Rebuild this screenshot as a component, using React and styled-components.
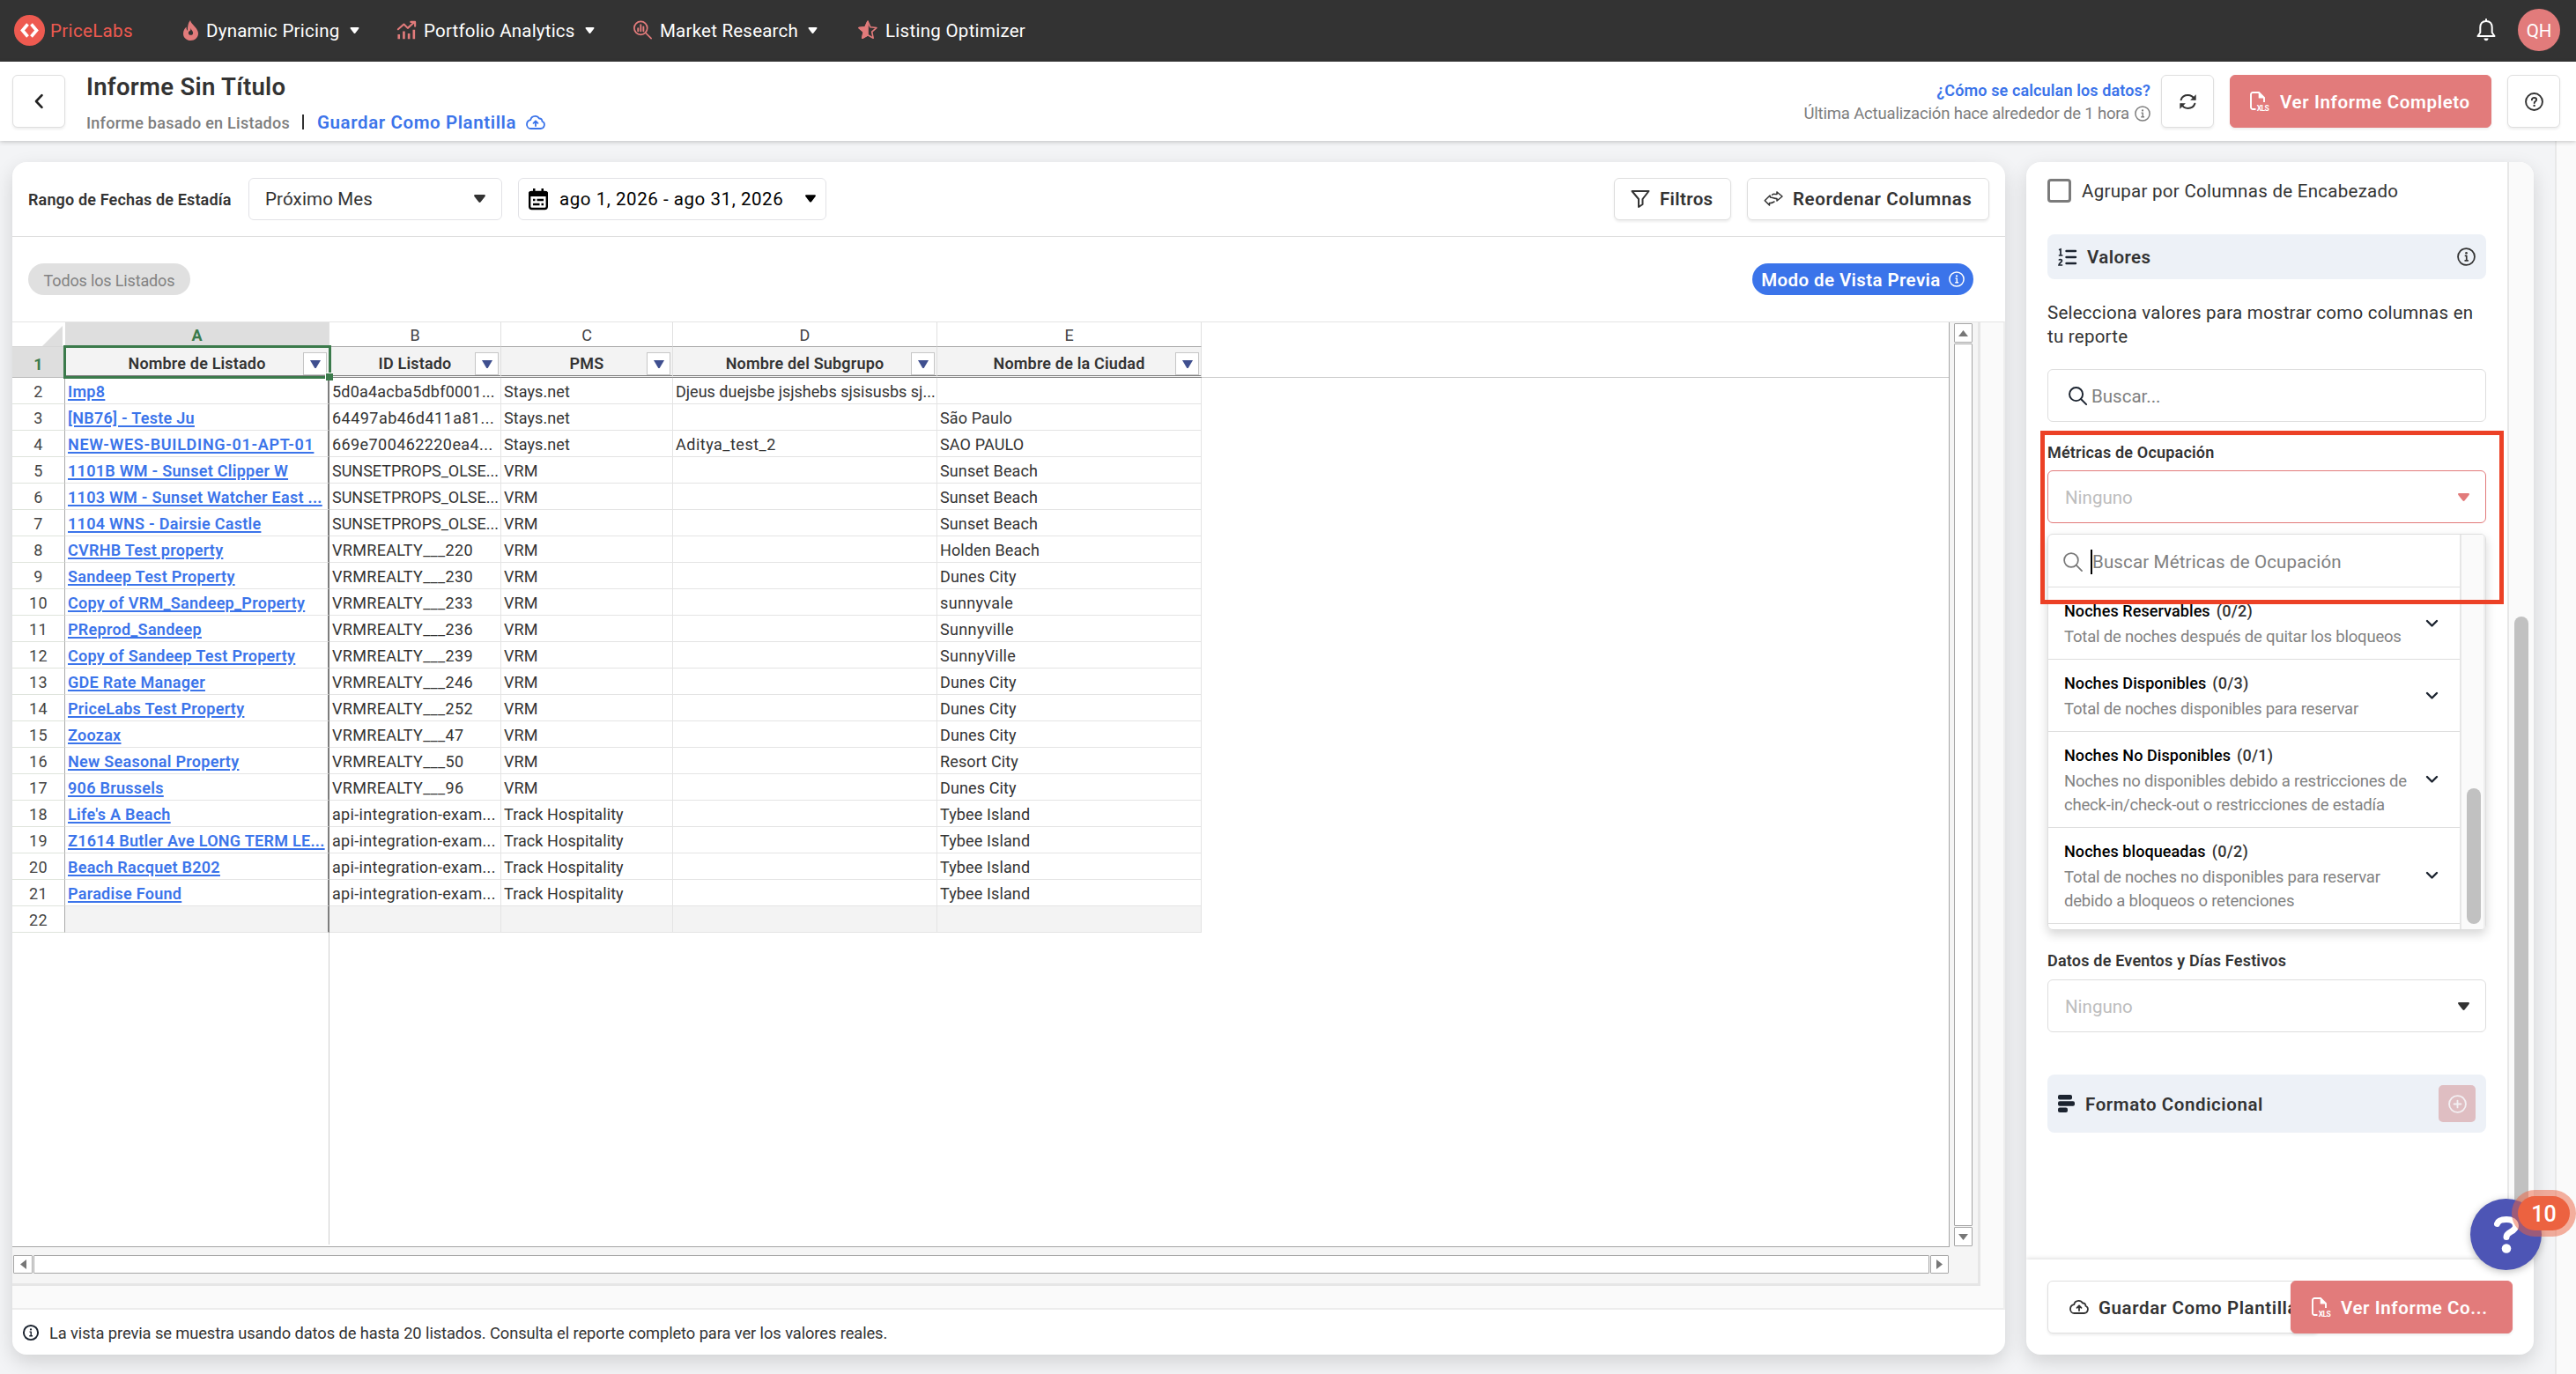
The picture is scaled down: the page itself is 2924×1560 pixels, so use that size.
import React from "react";
import styled, {createGlobalStyle, css} from "styled-components";

const GlobalStyle = createGlobalStyle`
  * { box-sizing: border-box; }
  html, body { margin: 0; padding: 0; }
  body {
    width: 2924px;
    height: 1560px;
    overflow: hidden;
    background: #f3f4f6;
    color: #333;
    font-family: Roboto, "Liberation Sans", sans-serif;
    font-size: 20px;
  }
  svg { display: block; flex: none; overflow: visible; }
`

const Text = styled.span`
  display: block;
  flex: none;
  white-space: nowrap;
  transform: translateY(1px);
  font-size: ${p => p.$size || 20.5}px;
  font-weight: ${p => p.$weight || 400};
  color: ${p => p.$color || "#333"};
  letter-spacing: ${p => p.$track || 0}px;
  line-height: 27px;
`

/* ---------- icons ---------- */

const Svg = ({w = 21, h = w, box = "0 0 24 24", color = "currentColor", sw = 2, fill = "none", children}) => (
    <svg width={w} height={h} viewBox={box} fill={fill} stroke={fill === "none" ? color : "none"} color={color}
         strokeWidth={sw} strokeLinecap="round" strokeLinejoin="round">
        {children}
    </svg>
)

const Caret = ({w = 13, h = 9, color = "#333"}) => (
    <svg width={w} height={h} viewBox="0 0 13 9" fill={color}>
        <path d="M1.2 0h10.6c1 0 1.5 1.100.8 1.900L7.700 8.200a1.600 1.600 0 0 1-2.400 0L.4 1.900C-.3 1.100.2 0 1.200 0z"/>
    </svg>
)

const Flame = () => (
    <svg width="17" height="23" viewBox="0 0 17 23" fill="#e27b7b">
        <path d="M8 0c.5 3 3 4.500 5.300 7.400C15.500 10 17 12 17 15c0 4.600-3.800 8-8.500 8S0 19.800 0 15.200C0 12 1.500 9.500 3.600 7.600c-.2 2 .2 3.300 1.400 4.300C5 8.500 5 3.500 8 0z"/>
        <path d="M8.500 8.800c.2 2.200 2.600 3.300 2.600 5.400a2.600 2.600 0 0 1-5.200 0c0-.8.200-1.300.6-1.800 1.500.3 2.200-1.600 2-3.600z" fill="#333"/>
    </svg>
)

const ChartIcon = () => (
    <Svg w={21} h={21} color="#e27b7b" sw={2.4}>
        <path d="M1 10.500 8.500 4l5 5L22 1.500M17.500 1H23v5.500"/>
        <path d="M2 17v6M8.500 13v10M15 16v7M21.500 11v12" strokeWidth="3" strokeLinecap="butt"/>
    </Svg>
)

const MarketIcon = () => (
    <Svg w={21} h={22} color="#e27b7b" sw={2}>
        <circle cx="9.500" cy="9.500" r="8.500"/>
        <path d="m16 16 7 7"/>
        <path d="M6 10v3.500M9.500 5.500v8M13 8v5.500" strokeWidth="2.200"/>
    </Svg>
)

const StarIcon = () => (
    <Svg w={22} h={22} color="#e27b7b" sw={1.8}>
        <path d="M12 1.500l3.200 7 7.600.8-5.700 5.100 1.600 7.600L12 18.200l-6.700 3.800 1.600-7.600L1.200 9.300l7.600-.8z"/>
        <path d="M12 1.500v16.700l-6.700 3.800 1.600-7.600L1.200 9.300l7.600-.8z" fill="#e27b7b"/>
    </Svg>
)

const BellIcon = () => (
    <Svg w={22} h={26} box="0 0 22 26" color="#fff" sw={2}>
        <path d="M11 1v2M11 3c-4.400 0-6.700 3-6.700 7v6L1.500 20h19l-2.800-4v-6c0-4-2.300-7-6.700-7z"/>
        <path d="M8.500 22.500h5c0 1.800-1 2.800-2.500 2.800s-2.500-1-2.500-2.800z" fill="#fff" stroke="none"/>
    </Svg>
)

const CloudIcon = ({color = "#333", w = 22, sw = 1.8}) => (
    <Svg w={w} h={w * 16 / 22} box="0 0 22 16" color={color} sw={sw}>
        <path d="M5.500 15h11a4.300 4.300 0 0 0 1.900-8.200C18.500 4.500 17 3.300 15 3.500 14 1.800 12.300.8 10.300.9 7.600 1 5.800 2.700 5.200 5.200 2.700 5.800 1 7.500 1 10.200 1 13 3 15 5.500 15z"/>
        <path d="M11 12V6.500M8.500 8.800 11 6.300l2.500 2.500" />
    </Svg>
)

const InfoIcon = ({w = 21, color = "#333", sw = 2}) => (
    <Svg w={w} color={color} sw={sw}>
        <circle cx="12" cy="12" r="10.800"/>
        <path d="M10 10.800h2.300v6M9.700 17h5" strokeWidth="1.900" strokeLinecap="butt"/>
        <circle cx="12" cy="7.200" r="1.500" fill={color} stroke="none"/>
    </Svg>
)

const HelpIcon = () => (
    <Svg w={21} sw={2.2} color="#333">
        <circle cx="12" cy="12" r="10.800"/>
        <path d="M9 9.600c0-1.700 1.300-2.700 3-2.700s3 1 3 2.600c0 2-2.800 2.100-2.800 4.300"/>
        <circle cx="12.100" cy="17" r="1.400" fill="#333" stroke="none"/>
    </Svg>
)

const RefreshIcon = () => (
    <Svg w={21} sw={2.3} color="#333">
        <path d="M3 9.500C4.200 6 7.500 3.500 12 3.500c3.500 0 6.500 1.800 8.500 5M21 14.500c-1.200 3.500-4.500 6-9 6-3.500 0-6.500-1.800-8.500-5"/>
        <path d="M22.500 2.500v7.500H15zM1.500 21.500V14H9z" fill="#333" stroke="none"/>
    </Svg>
)

const XlsIcon = () => (
    <svg width="22" height="22" viewBox="0 0 22 22">
        <path d="M6.500 20H3.200A2.200 2.200 0 0 1 1 17.800V3.200A2.200 2.200 0 0 1 3.200 1H10l6 6v5" fill="none" stroke="#fff" strokeWidth="1.900"/>
        <path d="M9.700 1v6.500h6.500z" fill="#fff"/>
        <text x="7.800" y="21.500" fontSize="8.500" fontWeight="700" fill="#fff" fontFamily="Roboto" textLength="14">XLS</text>
    </svg>
)

const FilterIcon = () => (
    <Svg w={22} h={20} box="0 0 22 20" sw={2}>
        <path d="M1.500 1h19l-7 9v6l-4.500 3v-9z"/>
    </Svg>
)

const SwapIcon = () => (
    <Svg w={22} h={17} box="0 0 22 17" sw={1.5}>
        <path d="M15 1l6 5-6 5V8.500c-3 0-5-1.500-7.500-1.500L7 5l-5.800 5.700L6.500 16v-2.500c3 .4 3.500-.8 5.500-1.500M15 1v2.500c-2.500.3-3.500-1-5.500.7"/>
    </Svg>
)

const CalendarIcon = () => (
    <svg width="22" height="24" viewBox="0 0 22 24">
        <rect x="1.200" y="4" width="19.600" height="19" rx="2.500" fill="none" stroke="#000" strokeWidth="2.400"/>
        <path d="M0 9V5.500A2.500 2.500 0 0 1 2.500 3H5V0h2.500v3h7V0H17v3h2.500A2.500 2.500 0 0 1 22 5.500V9z" fill="#000"/>
        <path d="M5 13h2.500M9.500 13H17M5 18h7.500M14.500 18H17" stroke="#000" strokeWidth="2.300"/>
    </svg>
)

const SearchIcon = ({w = 21, color = "#1c2430", sw = 2.2}) => (
    <Svg w={w} color={color} sw={sw}>
        <circle cx="9.800" cy="9.800" r="8.600"/>
        <path d="m16 16 7 7"/>
    </Svg>
)

const Chevron = () => (
    <Svg w={13} h={8} box="0 0 13 8" color="#1c2430" sw={2.4}><path d="M1 1l5.500 5.500L12 1"/></Svg>
)

const ListIcon = () => (
    <svg width="21" height="20" viewBox="0 0 21 20">
        <path d="M9.500 3h10.500M9.500 10h10.500M9.500 17h10.500" stroke="#1c2430" strokeWidth="2.400" strokeLinecap="round"/>
        <path d="M1 1.800 3 1v7M.8 8h4.600M1 13.500c.6-1.300 3.600-1.200 3.500.4C4.400 15.500 1.200 17 1 19h4.200" fill="none" stroke="#1c2430" strokeWidth="1.700"/>
    </svg>
)

const BarsIcon = () => (
    <svg width="19" height="20" viewBox="0 0 19 20" fill="#1c2430">
        <rect x="0" y="0" width="16" height="5.600" rx="2"/>
        <rect x="0" y="7.200" width="19" height="5.600" rx="2"/>
        <rect x="0" y="14.400" width="11" height="5.600" rx="2"/>
    </svg>
)

const PlusCircle = () => (
    <Svg w={21} color="#f3f0f3" sw={2.1}>
        <circle cx="12" cy="12" r="10.800"/>
        <path d="M12 7.500v9M7.500 12h9"/>
    </Svg>
)

/* ---------- top bars ---------- */

const NavBar = styled.nav`
  height: 70px;
  background: #333;
  display: flex;
  align-items: center;
  padding: 0 18px 2px 16px;
`
const Logo = styled.div`
  width: 192px;
  display: flex;
  align-items: center;
  gap: 6px;
`
const NavItem = styled.div`
  width: ${p => p.$width}px;
  display: flex;
  align-items: center;
  gap: ${p => p.$gap || 9}px;
  > svg:last-child { margin-left: 2px; }
`
const NavRight = styled.div`
  margin-left: auto;
  display: flex;
  align-items: center;
  gap: 25px;
`
const Avatar = styled.div`
  width: 48px;
  height: 48px;
  border-radius: 50%;
  background: #e27b7b;
  display: flex;
  align-items: center;
  justify-content: center;
`

const HeaderBar = styled.header`
  position: relative;
  height: 90px;
  background: #fff;
  box-shadow: 0 1px 5px rgba(0, 0, 0, .22);
  display: flex;
  align-items: center;
  padding: 0 18px 0 14px;
`
const Button = styled.div`
  display: flex;
  flex: none;
  align-items: center;
  justify-content: ${p => p.$width > 60 ? "flex-start" : "center"};
  gap: ${p => p.$gap || 12}px;
  width: ${p => p.$width}px;
  height: ${p => p.$height || 60}px;
  padding-left: ${p => p.$pad || 0}px;
  margin-left: ${p => p.$ml || 0}px;
  border-radius: 6px;
  color: #333;
  background: #fff;
  border: 1px solid #dfdfdf;
  box-shadow: 0 2px 3px rgba(0, 0, 0, .07);
  ${p => p.$primary && css`
    background: #e27b7b;
    border-color: #e27b7b;
    z-index: 1;
  `}
`
const Titles = styled.div`
  margin-left: 24px;
  margin-top: 6px;
`
const SubTitle = styled.div`
  display: flex;
  align-items: center;
  margin-top: 14px;
  > svg { margin-left: 11px; }
`
const Bar = styled.div`
  width: 2px;
  height: 17px;
  background: #333;
  margin: 0 15px 0 14px;
`
const Updated = styled.div`
  margin-left: auto;
  display: flex;
  flex-direction: column;
  align-items: flex-end;
  > div { display: flex; align-items: center; gap: 6px; }
`

/* ---------- main area ---------- */

const Main = styled.main`
  height: 1400px;
  display: flex;
  padding: 24px 0 22px 14px;
`
const Card = styled.section`
  flex: none;
  width: ${p => p.$width}px;
  height: 1354px;
  margin-right: ${p => p.$mr}px;
  border-radius: 16px;
  overflow: hidden;
  background: #fff;
  display: flex;
  flex-direction: column;
  box-shadow: 0 8px 22px rgba(0, 0, 0, .14);
`
const PageScroll = styled.div`
  width: 24px;
  height: 1400px;
  margin-top: -24px;
  background: #fafafa;
  border-left: 2px solid #e8e8e8;
`
const Toolbar = styled.div`
  height: 85px;
  border-bottom: 1px solid #dedede;
  display: flex;
  align-items: center;
  padding: 0 18px 1px;
`
const RangeLabel = styled.div`
  width: 250px;
`
const Picker = styled.div`
  height: 48px;
  width: ${p => p.$width}px;
  margin-left: ${p => p.$ml}px;
  border: 1px solid #e2e2e6;
  border-radius: 6px;
  display: flex;
  align-items: center;
  padding: 0 ${p => p.$right}px 0 ${p => p.$left}px;
  gap: 13px;
  > svg:last-child { margin-left: auto; }
`
const Spacer = styled.div`flex: 1;`
const PillRow = styled.div`
  height: 96px;
  display: flex;
  align-items: center;
  justify-content: space-between;
  padding: 0 36px 0 18px;
`
const Pill = styled.div`
  height: 36px;
  width: ${p => p.$width}px;
  border-radius: 18px;
  background: ${p => p.$bg};
  display: flex;
  align-items: center;
  justify-content: center;
  gap: 9px;
`

/* ---------- spreadsheet ---------- */

const SheetArea = styled.div`
  height: 1122px;
  flex: none;
  display: flex;
  border-top: 1px solid #e4e4e4;
  border-right: 2px solid #eee;
  border-bottom: 2px solid #ececec;
  background: #fafafa;
`
const Sheet = styled.div`
  width: 2234px;
  height: 1094px;
  background: #f5f5f5;
  border-right: 3px solid #e6e6e6;
  border-bottom: 3px solid #e6e6e6;
  display: grid;
  grid-template-columns: 2199px 1fr;
  grid-template-rows: 1050px 1fr;
`
const Viewport = styled.div`
  background: #fff;
  border-right: 1px solid #a6a6a6;
  border-bottom: 1px solid #a6a6a6;
  position: relative;
`
const COLS = "60px 300px 195px 195px 300px 300px"
const LetterRow = styled.div`
  display: grid;
  grid-template-columns: ${COLS};
  height: 28px;
`
const Letter = styled.div`
  display: flex;
  align-items: center;
  justify-content: center;
  background: ${p => p.$on ? "#dedede" : "#fff"};
  border-right: 1px solid #e0e0e0;
  border-bottom: 1px solid #ababab;
`
const Corner = styled.div`
  display: flex;
  justify-content: flex-end;
  padding: 4px 3px 0 0;
  border-bottom: 1px solid #d6d6d6;
`
const HeadRow = styled.div`
  display: grid;
  grid-template-columns: ${COLS};
  height: 35px;
  background: linear-gradient(#ccc, #ccc) bottom / 100% 1px no-repeat;
`
const HeadCell = styled.div`
  display: flex;
  align-items: center;
  justify-content: center;
  position: relative;
  padding-top: 2px;
  background: ${p => p.$num ? "#dedede" : "#f3f3f3"};
  border-right: 1px solid ${p => p.$num ? "#dedede" : "#e0e0e0"};
  border-bottom: ${p => p.$num ? "1px solid #bbb" : "3px double #808080"};
`
const FilterButton = styled.div`
  position: absolute;
  right: 2px;
  top: 6px;
  width: 27px;
  height: 26px;
  background: #fff;
  border: 1px solid #c6c6c6;
  display: flex;
  align-items: center;
  justify-content: center;
`
const Row = styled.div`
  display: grid;
  grid-template-columns: ${COLS};
  height: 30px;
`
const Cell = styled.div`
  overflow: hidden;
  padding: 1px 0 0 3px;
  background: ${p => p.$empty ? "#f3f3f3" : "#fff"};
  border-right: 1px solid #e4e4e4;
  border-bottom: 1px solid #e4e4e4;
  > span { text-decoration: ${p => p.$link ? "underline" : "none"}; text-decoration-thickness: 1.5px; text-underline-offset: 2px; }
  ${p => p.$link && css`border-right: 2px solid #7d7d7d;`}
`
const RowNumber = styled.div`
  display: flex;
  justify-content: center;
  padding-top: 1px;
  border-right: 1px solid #a9a9a9;
  border-bottom: 1px solid #dfe4dc;
`
const Selection = styled.div`
  position: absolute;
  left: 58px;
  top: 26px;
  width: 304px;
  height: 38px;
  border: 3px solid #3b7a4b;
`
const Handle = styled.div`
  position: absolute;
  left: 355px;
  top: 57px;
  width: 9px;
  height: 9px;
  background: #3b7a4b;
  border: 1px solid #fff;
  border-width: 1px 0 0 1px;
`
const FreezeLine = styled.div`
  width: 1px;
  height: 354px;
  margin-left: 359px;
  background: #cfcfcf;
`
const VScroll = styled.div`
  padding: 1px 5px 0 5px;
  display: flex;
  flex-direction: column;
  gap: 1px;
`
const HScroll = styled.div`
  padding: 9px 0 0 1px;
  display: flex;
  gap: 1px;
`
const ScrollBox = styled.div`
  width: ${p => p.$w}px;
  height: ${p => p.$h}px;
  flex: none;
  background: #fff;
  border: 1px solid #a6a6a6;
  border-radius: 1px;
  display: flex;
  align-items: center;
  justify-content: center;
`
const Note = styled.div`
  flex: 1;
  display: flex;
  align-items: center;
  gap: 12px;
  padding: 0 0 0 12px;
`

/* ---------- side panel ---------- */

const PanelBody = styled.div`
  height: 1246px;
  flex: none;
  display: flex;
`
const PanelContent = styled.div`
  width: 546px;
  padding: 19px 24px 0;
`
const PanelScroll = styled.div`
  flex: 1;
  background: #fafafa;
  border-left: 2px solid #e8e8e8;
  padding: 516px 0 0 6px;
`
const Thumb = styled.div`
  width: 16px;
  height: ${p => p.$h}px;
  border-radius: 8px;
  background: #c1c1c1;
`
const CheckRow = styled.div`
  display: flex;
  align-items: center;
  gap: 12px;
`
const CheckBox = styled.div`
  width: 27px;
  height: 27px;
  border: 3px solid #7b7b7b;
  border-radius: 4px;
`
const SectionBar = styled.div`
  height: ${p => p.$h}px;
  margin-top: ${p => p.$mt}px;
  padding: 0 12px;
  border-radius: 8px;
  background: #edf1f7;
  display: flex;
  align-items: center;
  gap: 12px;
`
const AddButton = styled.div`
  width: 42px;
  height: 42px;
  border-radius: 5px;
  background: #dfbec2;
  display: flex;
  align-items: center;
  justify-content: center;
`
const Paragraph = styled.div`
  margin-top: 24px;
`
const Field = styled.div`
  height: 60px;
  margin-top: ${p => p.$mt}px;
  border: 1px solid ${p => p.$active ? "#e27b7b" : "#dedede"};
  border-radius: 6px;
  display: flex;
  align-items: center;
  gap: 5px;
  padding: 1px 18px 0 ${p => p.$left || 19}px;
  > svg:last-child { margin-left: auto; }
`
const Label = styled.div`
  margin-top: ${p => p.$mt}px;
`
const Dropdown = styled.div`
  height: 450px;
  margin-top: 12px;
  border: 1px solid #dedede;
  border-radius: 6px;
  box-shadow: 0 5px 12px rgba(0, 0, 0, .16);
  display: flex;
  overflow: hidden;
`
const Options = styled.div`
  width: 467px;
`
const SearchRow = styled.div`
  height: 60px;
  border-bottom: 1px solid #dedede;
  display: flex;
  align-items: center;
  padding: 2px 0 0 17px;
`
const Cursor = styled.div`
  width: 2px;
  height: 28px;
  margin-left: 9px;
  background: #000;
`
const Option = styled.div`
  height: ${p => p.$h}px;
  border-bottom: 1px solid #dedede;
  display: flex;
  align-items: center;
  justify-content: space-between;
  padding: 0 25px 0 18px;
`
const OptionTitle = styled.div`
  display: flex;
  gap: 7px;
  margin-bottom: 3px;
`
const InnerScroll = styled.div`
  flex: 1;
  background: #fafafa;
  border-left: 2px solid #e6e6e6;
  border-right: 2px solid #eee;
  padding: 288px 0 0 6px;
`
const PanelFooter = styled.div`
  flex: 1;
  display: flex;
  align-items: center;
  padding-left: 24px;
  box-shadow: 0 -1px 5px rgba(0, 0, 0, .15);
`
const RedFrame = styled.div`
  position: absolute;
  left: 2316px;
  top: 489px;
  width: 526px;
  height: 197px;
  border: 5px solid #ec4126;
`
const Bubble = styled.div`
  position: absolute;
  left: 2804px;
  top: 1361px;
  width: 81px;
  height: 81px;
  border-radius: 50%;
  background: #4d55b5;
  box-shadow: 0 2px 8px rgba(0, 0, 0, .25);
  display: flex;
  align-items: center;
  justify-content: center;
`
const Badge = styled.div`
  position: absolute;
  left: 2858px;
  top: 1358px;
  width: 59px;
  height: 39px;
  border-radius: 20px;
  background: #ec6240;
  box-shadow: 0 0 0 7px rgba(236, 98, 64, .5);
  display: flex;
  align-items: center;
  justify-content: center;
`

const rows = [
    ["Imp8", "5d0a4acba5dbf0001...", "Stays.net", "Djeus duejsbe jsjshebs sjsisusbs sj...", ""],
    ["[NB76] - Teste Ju", "64497ab46d411a81...", "Stays.net", "", "São Paulo"],
    ["NEW-WES-BUILDING-01-APT-01", "669e700462220ea4...", "Stays.net", "Aditya_test_2", "SAO PAULO"],
    ["1101B WM - Sunset Clipper W", "SUNSETPROPS_OLSE...", "VRM", "", "Sunset Beach"],
    ["1103 WM - Sunset Watcher East ...", "SUNSETPROPS_OLSE...", "VRM", "", "Sunset Beach"],
    ["1104 WNS - Dairsie Castle", "SUNSETPROPS_OLSE...", "VRM", "", "Sunset Beach"],
    ["CVRHB Test property", "VRMREALTY___220", "VRM", "", "Holden Beach"],
    ["Sandeep Test Property", "VRMREALTY___230", "VRM", "", "Dunes City"],
    ["Copy of VRM_Sandeep_Property", "VRMREALTY___233", "VRM", "", "sunnyvale"],
    ["PReprod_Sandeep", "VRMREALTY___236", "VRM", "", "Sunnyville"],
    ["Copy of Sandeep Test Property", "VRMREALTY___239", "VRM", "", "SunnyVille"],
    ["GDE Rate Manager", "VRMREALTY___246", "VRM", "", "Dunes City"],
    ["PriceLabs Test Property", "VRMREALTY___252", "VRM", "", "Dunes City"],
    ["Zoozax", "VRMREALTY___47", "VRM", "", "Dunes City"],
    ["New Seasonal Property", "VRMREALTY___50", "VRM", "", "Resort City"],
    ["906 Brussels", "VRMREALTY___96", "VRM", "", "Dunes City"],
    ["Life's A Beach", "api-integration-exam...", "Track Hospitality", "", "Tybee Island"],
    ["Z1614 Butler Ave LONG TERM LE...", "api-integration-exam...", "Track Hospitality", "", "Tybee Island"],
    ["Beach Racquet B202", "api-integration-exam...", "Track Hospitality", "", "Tybee Island"],
    ["Paradise Found", "api-integration-exam...", "Track Hospitality", "", "Tybee Island"],
    ["", "", "", "", ""],
]

// letter spacing per column, with a few strings that need their own
const columnTrack = [.28, .32, .08, 0, .12]
const cellTrack = {
    "NEW-WES-BUILDING-01-APT-01": .68,
    "5d0a4acba5dbf0001...": .2,
    "64497ab46d411a81...": .46,
    "669e700462220ea4...": .42,
    "SUNSETPROPS_OLSE...": -.02,
    "Aditya_test_2": .5,
    "sunnyvale": .35,
    "Sunnyville": .35,
    "SunnyVille": .3,
}

const heads = ["Nombre de Listado", "ID Listado", "PMS", "Nombre del Subgrupo", "Nombre de la Ciudad"]

const options = [
    {title: "Noches Reservables", count: "(0/2)", lines: ["Total de noches después de quitar los bloqueos"]},
    {title: "Noches Disponibles", count: "(0/3)", lines: ["Total de noches disponibles para reservar"]},
    {title: "Noches No Disponibles", count: "(0/1)", lines: ["Noches no disponibles debido a restricciones de", "check-in/check-out o restricciones de estadía"]},
    {title: "Noches bloqueadas", count: "(0/2)", lines: ["Total de noches no disponibles para reservar", "debido a bloqueos o retenciones"]},
]

const Arrow = ({d}) => (
    <svg width="11" height="11" viewBox="0 0 11 11" fill="#777"><path d={d}/></svg>
)

const Nav = () => (
    <NavBar>
        <Logo>
            <svg width="35" height="35" viewBox="0 0 35 35">
                <circle cx="17.500" cy="17.500" r="17.500" fill="#ee5a50"/>
                <path d="M15.500 10.500 9.500 17.500l6 7M19.500 10.500l6 7-6 7" fill="none" stroke="#fff" strokeWidth="3.600"/>
            </svg>
            <Text $color="#ee5a50" $size={20.5} $track={.35}>PriceLabs</Text>
        </Logo>
        <NavItem $width={243}><Flame/><Text $color="#fff" $track={.25}>Dynamic Pricing</Text><Caret w={11} h={7} color="#fff"/></NavItem>
        <NavItem $width={268}><ChartIcon/><Text $color="#fff" $track={.2}>Portfolio Analytics</Text><Caret w={11} h={7} color="#fff"/></NavItem>
        <NavItem $width={255}><MarketIcon/><Text $color="#fff" $track={.22}>Market Research</Text><Caret w={11} h={7} color="#fff"/></NavItem>
        <NavItem $width={240}><StarIcon/><Text $color="#fff" $track={.28}>Listing Optimizer</Text></NavItem>
        <NavRight>
            <BellIcon/>
            <Avatar><Text $color="#fff">QH</Text></Avatar>
        </NavRight>
    </NavBar>
)

const Header = () => (
    <HeaderBar>
        <Button $width={60}>
            <Svg w={10} h={16} box="0 0 10 16" sw={2.6} color="#222"><path d="M8.500 1.200 2 8l6.500 6.800"/></Svg>
        </Button>
        <Titles>
            <Text $size={27.5} $weight={600} $track={.3}>Informe Sin Título</Text>
            <SubTitle>
                <Text $size={18} $weight={500} $color="#7d7d7d" $track={.25}>Informe basado en Listados</Text>
                <Bar/>
                <Text $weight={600} $color="#3b74ea" $track={.6}>Guardar Como Plantilla</Text>
                <CloudIcon color="#3b74ea"/>
            </SubTitle>
        </Titles>
        <Updated>
            <Text $size={18} $weight={600} $color="#3b74ea" $track={.13}>¿Cómo se calculan los datos?</Text>
            <div>
                <Text $size={18.5} $color="#7d7d7d" $track={-.17}>Última Actualización hace alrededor de 1 hora</Text>
                <InfoIcon w={18} color="#7d7d7d"/>
            </div>
        </Updated>
        <Button $width={60} $ml={12}><RefreshIcon/></Button>
        <Button $width={297} $ml={18} $pad={22} $primary>
            <XlsIcon/>
            <Text $color="#fff" $weight={600} $track={.65}>Ver Informe Completo</Text>
        </Button>
        <Button $width={60} $ml={18}><HelpIcon/></Button>
    </HeaderBar>
)

const Grid = () => (
    <SheetArea>
        <Sheet>
            <Viewport>
                <LetterRow>
                    <Corner><svg width="23" height="23" viewBox="0 0 23 23"><path d="M23 0v23H0z" fill="#dedede"/></svg></Corner>
                    {["A", "B", "C", "D", "E"].map((l, i) => (
                        <Letter key={l} $on={i === 0}>
                            <Text $size={18} $weight={i === 0 ? 700 : 400} $color={i === 0 ? "#3b7a4b" : "#444"}>{l}</Text>
                        </Letter>
                    ))}
                </LetterRow>
                <HeadRow>
                    <HeadCell $num><Text $size={18} $weight={700} $color="#3b7a4b">1</Text></HeadCell>
                    {heads.map(h => (
                        <HeadCell key={h}>
                            <Text $size={18} $weight={600} $track={.17}>{h}</Text>
                            <FilterButton><svg width="12" height="9" viewBox="0 0 12 9"><path d="M0 0h12L6.700 9H5.300z" fill="#3f4f8f"/></svg></FilterButton>
                        </HeadCell>
                    ))}
                </HeadRow>
                {rows.map((r, i) => (
                    <Row key={i}>
                        <RowNumber><Text $size={18} $color="#444" $track={.4}>{i + 2}</Text></RowNumber>
                        {r.map((c, j) => (
                            <Cell key={j} $link={j === 0} $empty={i === 20}>
                                <Text $size={18} $weight={j === 0 ? 600 : 400} $color={j === 0 ? "#3b74ea" : "#333"}
                                      $track={cellTrack[c] || columnTrack[j]}>{c}</Text>
                            </Cell>
                        ))}
                    </Row>
                ))}
                <FreezeLine/>
                <Selection/>
                <Handle/>
            </Viewport>
            <VScroll>
                <ScrollBox $w={21} $h={22}><Arrow d="M5.500 2 11 9H0z"/></ScrollBox>
                <ScrollBox $w={21} $h={1002}/>
                <ScrollBox $w={21} $h={22}><Arrow d="M5.500 9 11 2H0z"/></ScrollBox>
            </VScroll>
            <HScroll>
                <ScrollBox $w={22} $h={21}><Arrow d="M2 5.500 9 0v11z"/></ScrollBox>
                <ScrollBox $w={2152} $h={21}/>
                <ScrollBox $w={21} $h={21}><Arrow d="M9 5.500 2 0v11z"/></ScrollBox>
            </HScroll>
        </Sheet>
    </SheetArea>
)

const Report = () => (
    <Card $width={2262} $mr={24}>
        <Toolbar>
            <RangeLabel><Text $size={18} $weight={600} $track={.15}>Rango de Fechas de Estadía</Text></RangeLabel>
            <Picker $width={288} $ml={0} $left={18} $right={18}>
                <Text $track={.15}>Próximo Mes</Text>
                <Caret/>
            </Picker>
            <Picker $width={350} $ml={18} $left={11} $right={11}>
                <CalendarIcon/>
                <Text $color="#000" $track={.56}>ago 1, 2026 - ago 31, 2026</Text>
                <Caret w={12} color="#000"/>
            </Picker>
            <Spacer/>
            <Button $width={133} $height={48} $pad={18} $gap={11}><FilterIcon/><Text $weight={600} $track={.35}>Filtros</Text></Button>
            <Button $width={275} $height={48} $ml={18} $pad={18} $gap={11}><SwapIcon/><Text $weight={600} $track={.58}>Reordenar Columnas</Text></Button>
        </Toolbar>
        <PillRow>
            <Pill $width={184} $bg="#e0e0e0"><Text $size={18} $color="#828282" $track={-.15}>Todos los Listados</Text></Pill>
            <Pill $width={251} $bg="#3b74ea">
                <Text $weight={600} $color="#fff" $track={.4}>Modo de Vista Previa</Text>
                <InfoIcon w={18} color="#fff"/>
            </Pill>
        </PillRow>
        <Grid/>
        <Note>
            <InfoIcon w={18} color="#1c2430" sw={2.6}/>
            <Text $size={18.300} $track={-.08}>La vista previa se muestra usando datos de hasta 20 listados. Consulta el reporte completo para ver los valores reales.</Text>
        </Note>
    </Card>
)

const MetricsDropdown = () => (
    <Dropdown>
        <Options>
            <SearchRow>
                <SearchIcon w={22} color="#777" sw={1.9}/>
                <Cursor/>
                <Text $color="#808080" $track={.15}>Buscar Métricas de Ocupación</Text>
            </SearchRow>
            {options.map(o => (
                <Option key={o.title} $h={o.lines.length > 1 ? 109 : 82}>
                    <div>
                        <OptionTitle>
                            <Text $size={18} $weight={500} $color="#000" $track={.08}>{o.title}</Text>
                            <Text $size={18} $weight={500} $track={.25}>{o.count}</Text>
                        </OptionTitle>
                        {o.lines.map(l => <Text key={l} $size={18.500} $color="#828282" $track={-.2}>{l}</Text>)}
                    </div>
                    <Chevron/>
                </Option>
            ))}
        </Options>
        <InnerScroll><Thumb $h={154}/></InnerScroll>
    </Dropdown>
)

const Panel = () => (
    <Card $width={576} $mr={24}>
        <PanelBody>
            <PanelContent>
                <CheckRow><CheckBox/><Text $track={.28}>Agrupar por Columnas de Encabezado</Text></CheckRow>
                <SectionBar $h={51} $mt={36}>
                    <ListIcon/><Text $weight={600} $track={.4}>Valores</Text><Spacer/><InfoIcon/>
                </SectionBar>
                <Paragraph>
                    <Text $track={.24}>Selecciona valores para mostrar como columnas en</Text>
                    <Text $track={.24}>tu reporte</Text>
                </Paragraph>
                <Field $mt={24} $left={23}>
                    <SearchIcon/>
                    <Text $color="#808080">Buscar...</Text>
                    <Spacer/>
                </Field>
                <Label $mt={20}><Text $size={18} $weight={600} $track={.18}>Métricas de Ocupación</Text></Label>
                <Field $mt={8} $active><Text $color="#bdbdbd">Ninguno</Text><Caret color="#e27b7b"/></Field>
                <MetricsDropdown/>
                <Label $mt={20}><Text $size={18} $weight={600} $track={.2}>Datos de Eventos y Días Festivos</Text></Label>
                <Field $mt={9}><Text $color="#bdbdbd">Ninguno</Text><Caret/></Field>
                <SectionBar $h={66} $mt={48}>
                    <BarsIcon/><Text $weight={600} $track={.58}>Formato Condicional</Text><Spacer/>
                    <AddButton><PlusCircle/></AddButton>
                </SectionBar>
            </PanelContent>
            <PanelScroll><Thumb $h={720}/></PanelScroll>
        </PanelBody>
        <PanelFooter>
            <Button $width={308} $pad={24} $gap={11}><CloudIcon/><Text $weight={600} $track={.6}>Guardar Como Plantilla</Text></Button>
            <Button $width={252} $ml={-32} $pad={23} $gap={11} $primary><XlsIcon/><Text $color="#fff" $weight={600} $track={.6}>Ver Informe Co...</Text></Button>
        </PanelFooter>
    </Card>
)

const App = () => {
    return (
        <>
            <GlobalStyle/>
            <Nav/>
            <Header/>
            <Main>
                <Report/>
                <Panel/>
                <PageScroll/>
            </Main>
            <RedFrame/>
            <Bubble>
                <svg width="28" height="42" viewBox="0 0 28 42" fill="none">
                    <path d="M3.500 8.500C4.500 5 8 3.500 14 3.500c6 0 10.500 2.500 10.500 7.500 0 7-10.500 6-10.500 12.500" stroke="#fff" strokeWidth="7" strokeLinecap="round" strokeLinejoin="round"/>
                    <circle cx="14" cy="36.500" r="5.300" fill="#fff"/>
                </svg>
            </Bubble>
            <Badge><Text $size={25} $color="#fff" $weight={500}>10</Text></Badge>
        </>
    )
}

export default App;
